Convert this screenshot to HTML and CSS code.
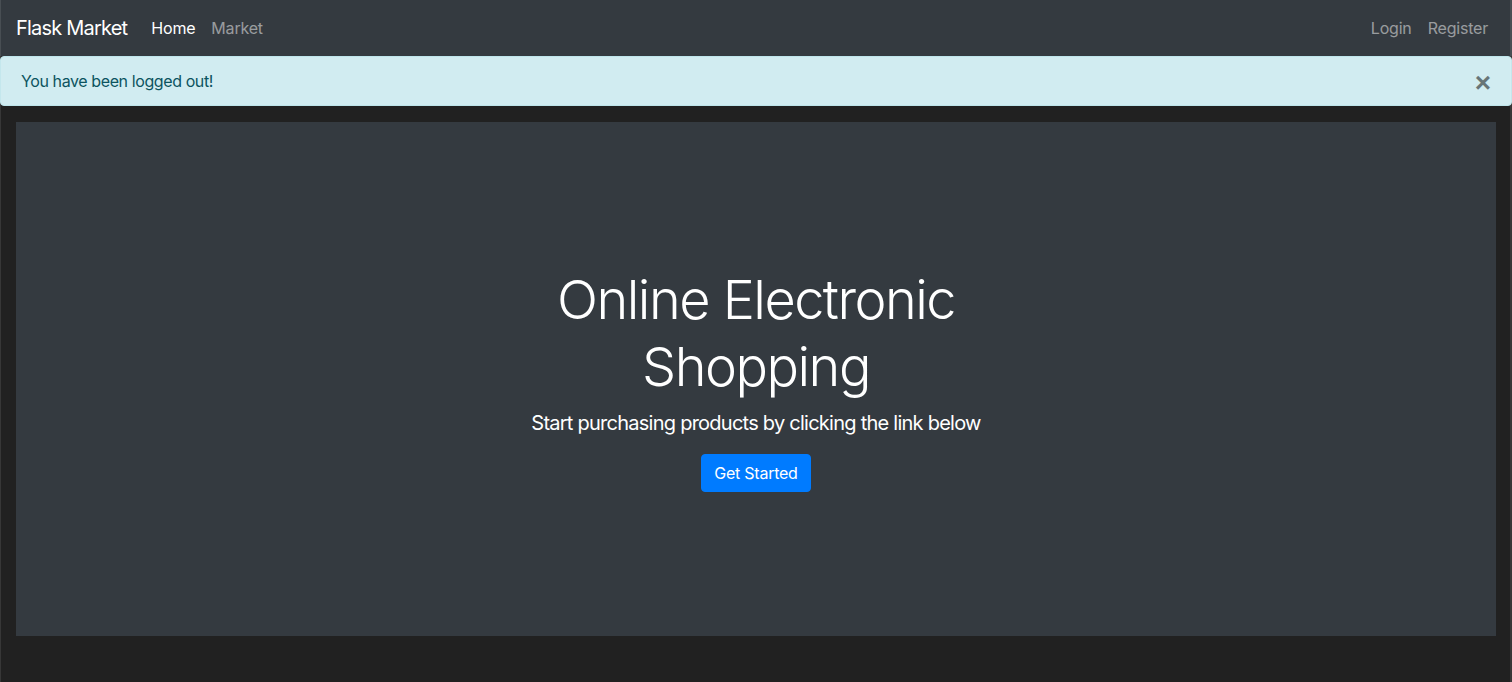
FILE: index.html
```html
<!DOCTYPE html>
<html lang="en">
<head>
<meta charset="utf-8">
<title>Flask Market</title>
<link rel="stylesheet" href="styles.css">
</head>
<body>
<nav class="navbar">
  <a class="brand" href="#">Flask Market</a>
  <ul class="nav">
    <li><a class="nav-link active" href="#">Home</a></li>
    <li><a class="nav-link" href="#">Market</a></li>
  </ul>
  <ul class="nav nav-right">
    <li><a class="nav-link" href="#">Login</a></li>
    <li><a class="nav-link" href="#">Register</a></li>
  </ul>
</nav>
<div class="alert">
  <span>You have been logged out!</span>
  <button class="close" type="button" aria-label="Close">&times;</button>
</div>
<main class="jumbotron">
  <div class="hero">
    <h1 class="display">Online Electronic Shopping</h1>
    <p class="lead">Start purchasing products by clicking the link below</p>
    <a class="btn" href="#">Get Started</a>
  </div>
</main>
</body>
</html>
```

FILE: styles.css
```css
* { box-sizing: border-box; }
html, body { margin: 0; padding: 0; }
body {
  background: #212121;
  font-family: Inter, "Noto Sans", "Liberation Sans", sans-serif;
  font-size: 16px;
  line-height: 1.5;
  color: #fff;
  min-height: 682px;
}
body::after {
  content: "";
  position: fixed;
  top: 0;
  left: 0;
  right: 0;
  bottom: 0;
  border-left: 1px solid rgba(255,255,255,0.1);
  border-right: 2px solid rgba(255,255,255,0.1);
  pointer-events: none;
}
a { text-decoration: none; }
.navbar {
  display: flex;
  align-items: center;
  height: 56px;
  padding: 8px 16px;
  background: #343a40;
}
.brand {
  color: #fff;
  font-size: 20px;
  line-height: 30px;
  padding: 5px 0;
  margin-right: 16px;
  letter-spacing: -0.8px;
}
.nav {
  display: flex;
  list-style: none;
  margin: 0;
  padding: 0;
}
.nav-right { margin-left: auto; }
.nav-link {
  display: block;
  padding: 8px;
  color: rgba(255,255,255,0.5);
  letter-spacing: -0.2px;
}
.nav-link.active { color: #fff; }
.alert {
  position: relative;
  display: flex;
  align-items: center;
  height: 50px;
  padding: 12px 20px;
  background: #d1ecf1;
  border: 1px solid #bee5eb;
  border-radius: 4px;
  color: #0c5460;
  letter-spacing: -0.4px;
}
.close {
  position: absolute;
  top: 2px;
  right: 0;
  padding: 10px 20px;
  border: 0;
  background: transparent;
  font-family: "Liberation Sans", sans-serif;
  font-size: 28px;
  font-weight: 700;
  line-height: 1;
  color: #000;
  opacity: 0.5;
}
.jumbotron {
  margin: 16px 16px 46px 16px;
  height: 514px;
  background: #343a40;
  display: flex;
  align-items: center;
  justify-content: center;
}
.hero {
  max-width: 470px;
  text-align: center;
}
.display {
  margin: 0 0 8px;
  font-size: 54px;
  font-weight: 350;
  line-height: 67px;
  letter-spacing: -1.5px;
}
.lead {
  margin: 0 0 16px;
  font-size: 20px;
  font-weight: 400;
  line-height: 30px;
  white-space: nowrap;
  letter-spacing: -0.75px;
}
.btn {
  display: inline-block;
  padding: 6px 12px;
  background: #007bff;
  border: 1px solid #007bff;
  border-radius: 4px;
  color: #fff;
  font-size: 16px;
  line-height: 24px;
  letter-spacing: -0.25px;
}
```
